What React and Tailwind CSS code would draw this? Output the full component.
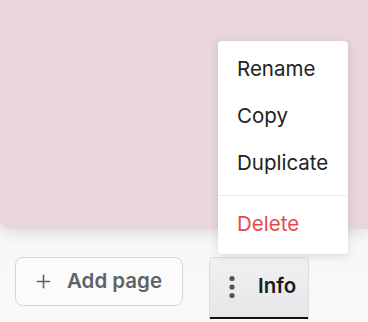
import React from "react";
import { Plus } from "lucide-react";

const menuItems = ["Rename", "Copy", "Duplicate"];

function PageMenu() {
  return (
    <div className="absolute left-[218px] top-[41px] w-[130px] rounded-[4px] bg-white pt-[5px] pb-[6px] shadow-[0_2px_8px_rgba(0,0,0,0.12)]">
      {menuItems.map((label) => (
        <div key={label} className="flex h-[47px] items-center px-[19px] text-[20.5px] text-[#222222]">
          {label}
        </div>
      ))}
      <div className="mt-[8px] mb-[5px] h-px bg-[#ececec]" />
      <div className="flex h-[47px] items-center px-[19px] text-[20.5px] text-[#e9474f]">Delete</div>
    </div>
  );
}

export default function App() {
  return (
    <div
      className="relative h-[322px] w-[368px] overflow-hidden bg-gradient-to-b from-[#ececec] to-[#fafafa]"
      style={{ fontFamily: "Inter, 'Noto Sans', sans-serif" }}
    >
      <div className="-ml-[2px] h-[229px] rounded-bl-[14px] bg-[#e9d5dc] shadow-[0_4px_14px_rgba(0,0,0,0.10)]" />

      <div className="flex items-start gap-[26px] pl-[15px] pt-[28px]">
        <button className="flex h-[49px] w-[168px] items-center gap-[13px] rounded-[8px] border-[1.5px] border-[#d6d6d6] bg-white/40 pl-[17px] text-[20.5px] font-semibold text-[#5f6368]">
          <Plus size={21} strokeWidth={1.8} />
          Add page
        </button>

        <button className="flex h-[62px] w-[100px] items-center gap-[23px] rounded-t-[5px] border border-b-0 border-[#dcdcdc] bg-gradient-to-b from-[#f1f1f2] to-[#e5e6e8] pl-[19px] pb-[4px] text-[20.5px] font-semibold text-[#1b1b1b] shadow-[inset_0_-2px_0_#111111]">
          <svg width="6" height="24" viewBox="0 0 6 24" fill="#555555">
            <circle cx="3" cy="3.5" r="2.6" />
            <circle cx="3" cy="12" r="2.6" />
            <circle cx="3" cy="20.5" r="2.6" />
          </svg>
          Info
        </button>
      </div>

      <PageMenu />
    </div>
  );
}
